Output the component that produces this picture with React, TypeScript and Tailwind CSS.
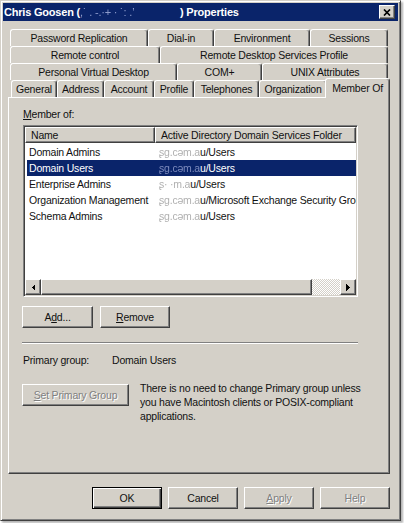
import React from "react";

const raised =
  "bg-[#d4d0c8] border border-t-white border-l-white border-r-[#404040] border-b-[#404040] shadow-[inset_-1px_-1px_#808080]";

function Tab({ className, children }: { className: string; children: React.ReactNode }) {
  return (
    <div
      className={
        "h-[17px] flex items-center justify-center whitespace-nowrap border-t border-l border-white border-r border-r-[#404040] rounded-t-[3px] shadow-[inset_-1px_0_#808080] " +
        className
      }
    >
      {children}
    </div>
  );
}

function Blur({ children, className = "" }: { children: React.ReactNode; className?: string }) {
  return <span className={"blur-[0.6px] " + className}>{children}</span>;
}

function Arrow({ dir }: { dir: "l" | "r" }) {
  return (
    <svg width="4" height="7" viewBox="0 0 4 7" shapeRendering="crispEdges">
      {dir === "l" ? <path d="M4 0V7L0.5 3.5Z" fill="#000" /> : <path d="M0 0V7L3.5 3.5Z" fill="#000" />}
    </svg>
  );
}

const rows: { name: string; blur: string; rest: string; sel?: boolean }[] = [
  { name: "Domain Admins", blur: "ʂg.cəm.a", rest: "u/Users" },
  { name: "Domain Users", blur: "ʂg.cəm.a", rest: "u/Users", sel: true },
  { name: "Enterprise Admins", blur: "ʂ·   ·m.a", rest: "u/Users" },
  { name: "Organization Management", blur: "ʂg.cəm.a", rest: "u/Microsoft Exchange Security Groups" },
  { name: "Schema Admins", blur: "ʂg.cəm.a", rest: "u/Users" },
];

export default function App() {
  return (
    <div className="w-[404px] h-[523px] bg-white font-['Liberation_Sans',Arial,sans-serif] text-[10.5px] tracking-[-0.2px] leading-[13px] text-[#111]">
      <div className="w-[401px] h-[521px] bg-[#d4d0c8] border border-[#d4d0c8] border-r-[#404040] border-b-[#404040] shadow-[inset_1px_1px_#fff,inset_-1px_-1px_#808080,2px_2px_2px_rgba(0,0,0,0.3)] p-[2px] flex flex-col">
        {/* Title bar */}
        <div className="h-[18px] bg-[#0a246a] flex items-center pl-[1px] pr-[3px]">
          <div className="flex-1 text-white font-bold text-[11px] whitespace-nowrap overflow-hidden">
            Chris Goosen (
            <Blur className="inline-block w-[100px] text-[#8e9ccc] font-normal">,˙ . -.·+ ·      ˙:   .ʼ</Blur>
            ) Properties
          </div>
          <div className={"w-[16px] h-[14px] flex items-center justify-center " + raised}>
            <svg width="8" height="7" viewBox="0 0 8 7">
              <path d="M1 0.5L7 6.5M7 0.5L1 6.5" stroke="#000" strokeWidth="1.7" />
            </svg>
          </div>
        </div>

        {/* Tabs */}
        <div className="ml-[5px] mt-[8px] w-[382px] flex flex-col">
          <div className="flex pl-[2px]">
            <Tab className="w-[138px]">Password Replication</Tab>
            <Tab className="w-[66px]">Dial-in</Tab>
            <Tab className="w-[96px]">Environment</Tab>
            <Tab className="w-[78px]">Sessions</Tab>
          </div>
          <div className="flex pl-[2px]">
            <Tab className="w-[150px]">Remote control</Tab>
            <Tab className="w-[228px]">Remote Desktop Services Profile</Tab>
          </div>
          <div className="flex pl-[2px]">
            <Tab className="w-[167px]">Personal Virtual Desktop</Tab>
            <Tab className="w-[85px]">COM+</Tab>
            <Tab className="w-[126px]">UNIX Attributes</Tab>
          </div>
          <div className="flex items-end pl-[3px] h-[17px]">
            <Tab className="w-[46px]">General</Tab>
            <Tab className="w-[47px]">Address</Tab>
            <Tab className="w-[50px]">Account</Tab>
            <Tab className="w-[40px]">Profile</Tab>
            <Tab className="w-[65px]">Telephones</Tab>
            <Tab className="w-[68px]">Organization</Tab>
            <div className="relative z-10 -ml-[2px] -mb-[1px] w-[65px] h-[20px] bg-[#d4d0c8] flex items-start justify-center pt-[3px] whitespace-nowrap border-t border-l border-white border-r border-r-[#404040] rounded-t-[3px] shadow-[inset_-1px_0_#808080]">
              Member Of
            </div>
          </div>

          {/* Panel */}
          <div className="h-[377px] border border-t-white border-l-white border-r-[#404040] border-b-[#404040] shadow-[inset_-1px_-1px_#808080] flex flex-col">
            <div className="ml-[14px] mt-[10px]">
              <span className="underline">M</span>ember of:
            </div>

            {/* List view */}
            <div className="ml-[14px] mt-[4px] w-[335px] h-[172px] bg-white border border-t-[#808080] border-l-[#808080] border-r-white border-b-white shadow-[inset_1px_1px_#404040,inset_-1px_-1px_#d4d0c8] p-[1px] flex flex-col">
              <div className="h-[16px] flex shrink-0">
                <div className={"w-[130px] h-[16px] flex items-center pl-[5px] " + raised}>Name</div>
                <div className={"flex-1 h-[16px] flex items-center pl-[5px] whitespace-nowrap overflow-hidden " + raised}>
                  Active Directory Domain Services Folder
                </div>
              </div>
              <div className="flex-1 pt-[1px] overflow-hidden">
                {rows.map((r) => (
                  <div key={r.name} className="pl-[2px]">
                    <div
                      className={
                        "h-[16px] flex items-center whitespace-nowrap overflow-hidden " +
                        (r.sel ? "bg-[#0a246a] text-white" : "")
                      }
                    >
                      <div className="w-[132px] pl-[2px] shrink-0">{r.name}</div>
                      <div className="whitespace-nowrap">
                        <Blur className={r.sel ? "text-[#7d8bbd]" : "text-[#b0b0b0]"}>{r.blur}</Blur>
                        {r.rest}
                      </div>
                    </div>
                  </div>
                ))}
              </div>
              {/* Scrollbar */}
              <div className="h-[16px] flex shrink-0">
                <div className={"w-[16px] h-[16px] flex items-center justify-center " + raised}>
                  <Arrow dir="l" />
                </div>
                <div className={"w-[271px] h-[16px] " + raised} />
                <div className="flex-1 h-[16px] bg-[repeating-conic-gradient(#ffffff_0_25%,#d4d0c8_0_50%)] bg-[length:2px_2px]" />
                <div className={"w-[16px] h-[16px] flex items-center justify-center " + raised}>
                  <Arrow dir="r" />
                </div>
              </div>
            </div>

            {/* Add / Remove */}
            <div className="flex mt-[9px] ml-[13px]">
              <div className={"w-[71px] h-[22px] flex items-center justify-center " + raised}>
                A<span className="underline">d</span>d...
              </div>
              <div className={"ml-[7px] w-[70px] h-[22px] flex items-center justify-center " + raised}>
                <span className="underline">R</span>emove
              </div>
            </div>

            {/* separator */}
            <div className="ml-[13px] mt-[14px] w-[336px] h-[2px] border-t border-t-[#808080] border-b border-b-white" />

            {/* Primary group */}
            <div className="ml-[14px] mt-[10px] flex">
              <div className="w-[89px]">Primary group:</div>
              <div>Domain Users</div>
            </div>

            <div className="ml-[13px] mt-[17px] flex items-start">
              <div
                className={
                  "w-[107px] h-[22px] shrink-0 flex items-center justify-center text-[#808080] [text-shadow:1px_1px_0_#fff] " +
                  raised
                }
              >
                <span className="underline">S</span>et Primary Group
              </div>
              <div className="ml-[11px] -mt-[3px] leading-[14px] whitespace-nowrap">
                There is no need to change Primary group unless
                <br />
                you have Macintosh clients or POSIX-compliant
                <br />
                applications.
              </div>
            </div>
          </div>
        </div>

        {/* Bottom buttons */}
        <div className="mt-[13px] flex justify-end gap-[6px] mr-[8px]">
          <div className="w-[70px] h-[22px] flex items-center justify-center bg-[#d4d0c8] border border-black shadow-[inset_1px_1px_#fff,inset_-1px_-1px_#404040,inset_-2px_-2px_#808080]">
            OK
          </div>
          <div className={"w-[70px] h-[22px] flex items-center justify-center " + raised}>Cancel</div>
          <div className={"w-[70px] h-[22px] flex items-center justify-center text-[#808080] [text-shadow:1px_1px_0_#fff] " + raised}>
            <span className="underline">A</span>pply
          </div>
          <div className={"w-[70px] h-[22px] flex items-center justify-center text-[#808080] [text-shadow:1px_1px_0_#fff] " + raised}>
            Help
          </div>
        </div>
      </div>
    </div>
  );
}
